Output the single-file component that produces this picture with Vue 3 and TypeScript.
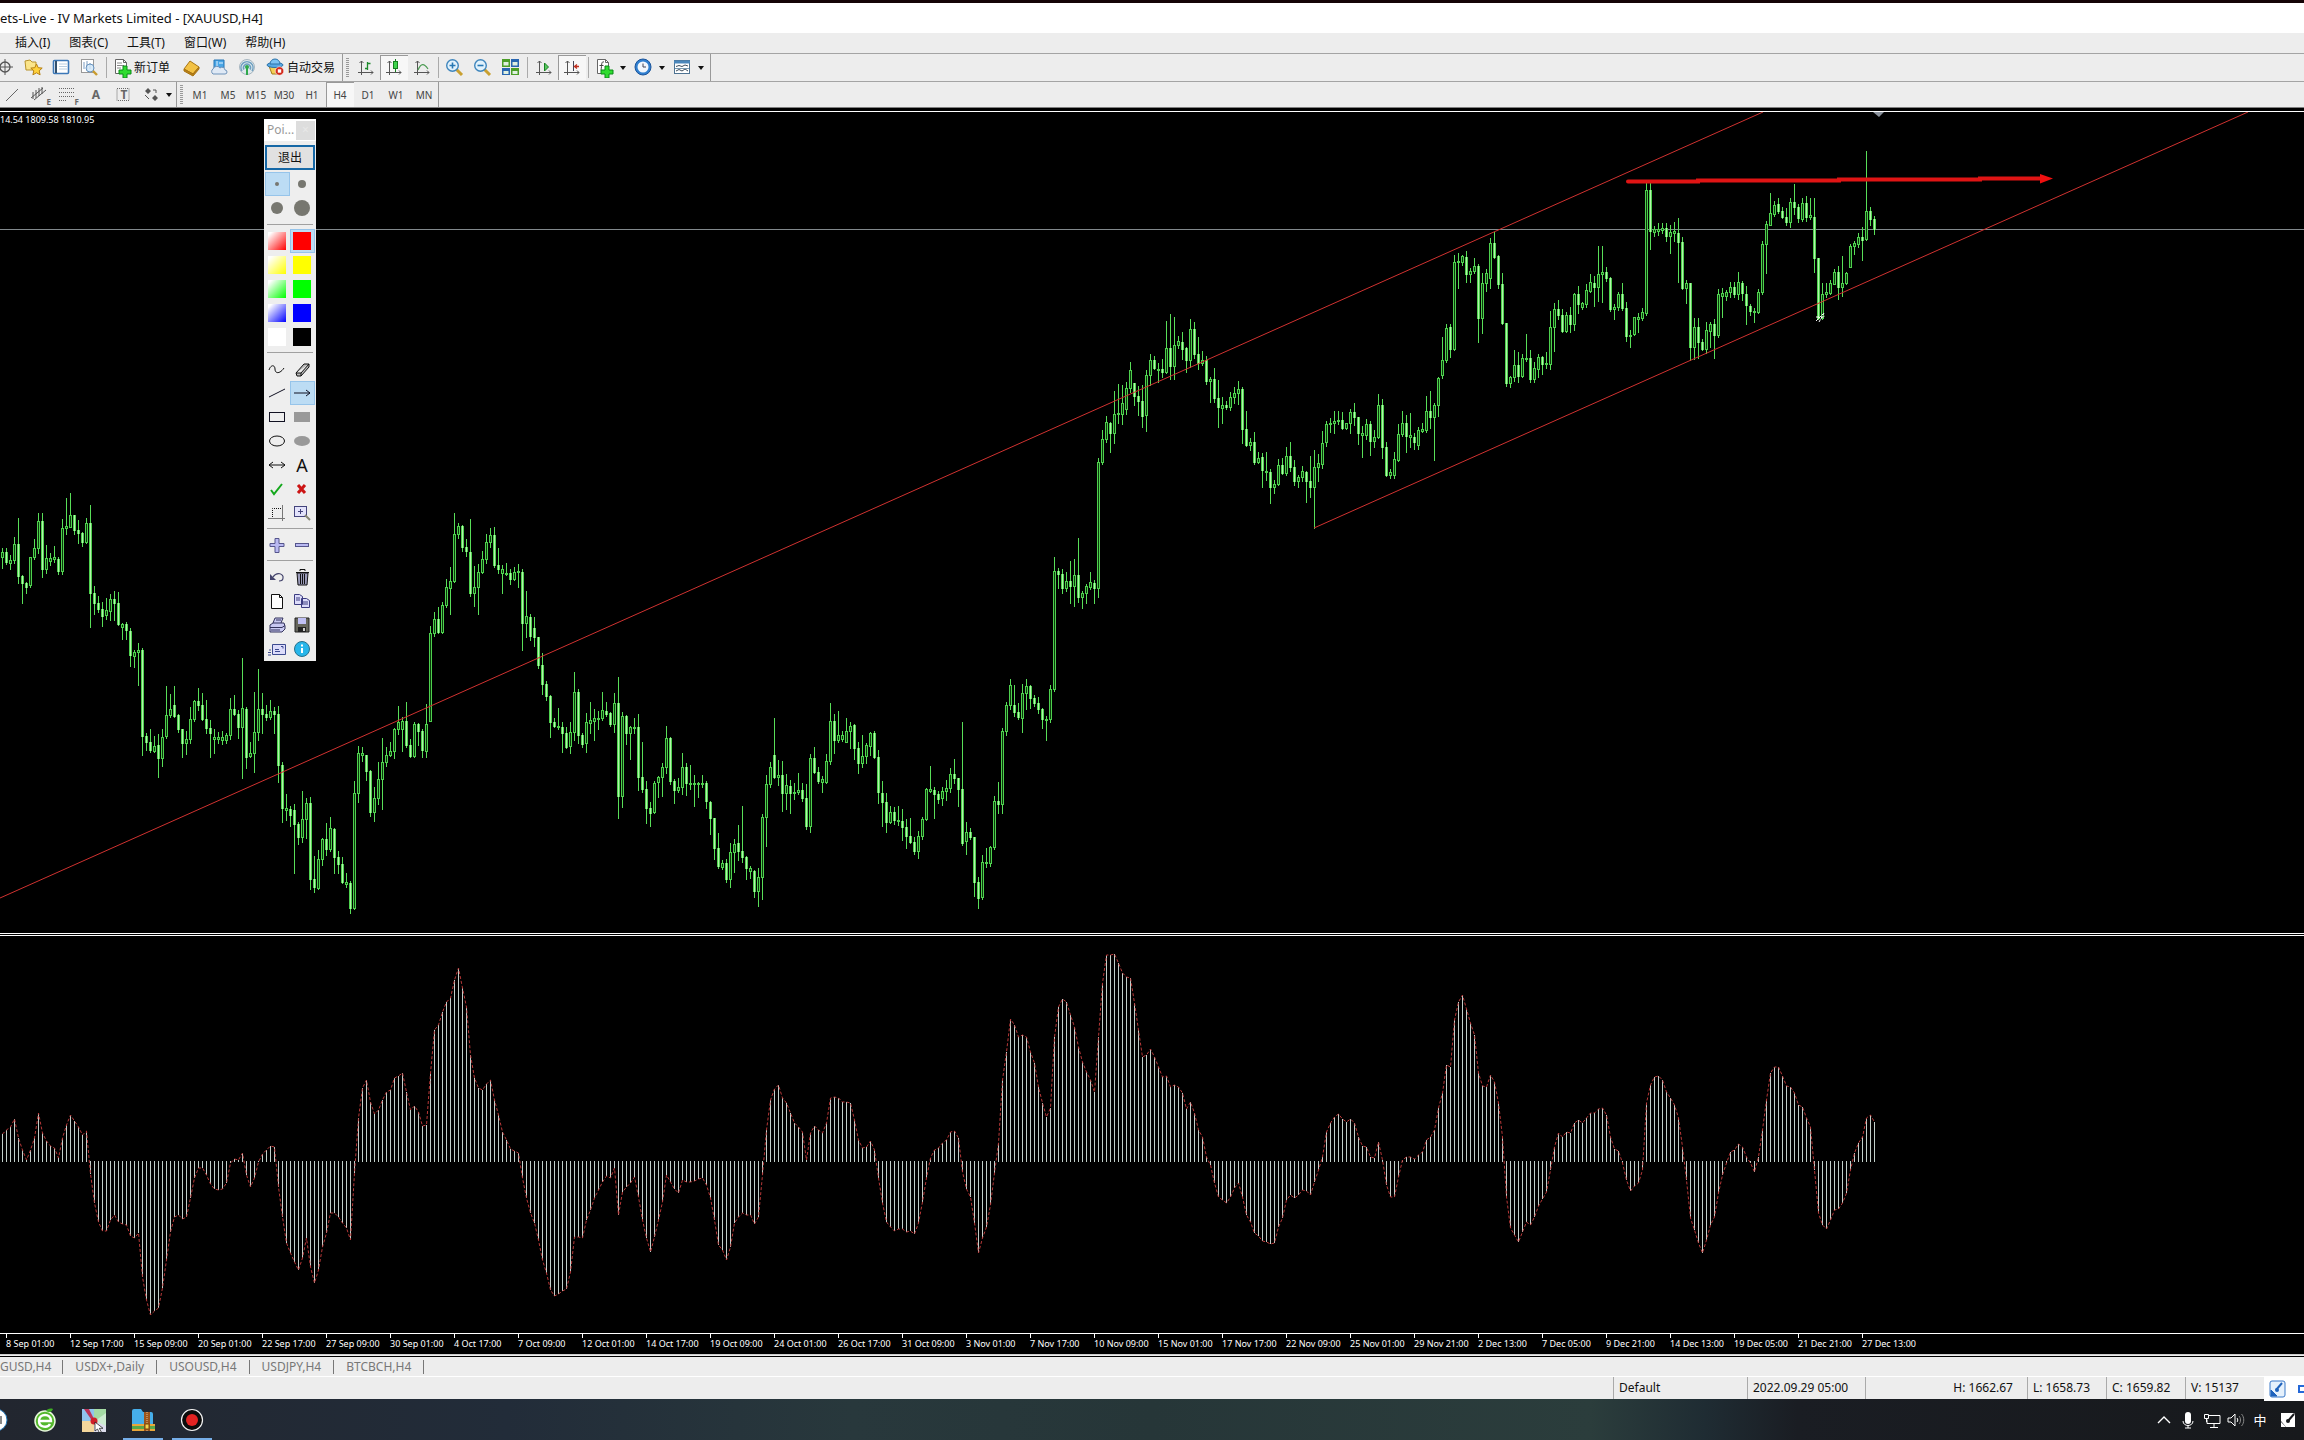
<script setup lang="ts">
interface Candle { x: number; high: number; top: number; bottom: number; low: number; falling: boolean }
interface Tool { name: string; label: string; pressed?: boolean; menu?: boolean; text?: string; sepAfter?: boolean }

/* One token per bar: high,top,bottom,low; a trailing "f" marks a falling bar. */
const candleData = `
548,552,557,568 548,552,562,564f 555,560,563,569 537,544,560,563 518,544,576,583f 575,576,583,603f 582,583,587,593f 557,557,585,587
539,548,557,559 513,521,548,553 513,521,569,577f 545,558,569,573 553,558,561,565 546,557,559,562 557,559,571,574f 519,528,571,574
498,526,528,534 493,515,527,527 515,515,530,534f 520,530,533,543f 532,533,542,546f 518,523,542,543 505,523,593,627f 586,593,603,614f
596,603,609,612f 602,609,616,626f 598,610,615,619 594,599,611,620 591,599,603,620f 592,603,624,625f 623,624,627,639 622,624,630,639f
628,631,655,666f 650,652,656,667 643,650,652,685 648,650,736,755f 733,736,742,750f 729,742,750,752f 736,746,751,752 734,745,758,777f
729,737,758,766 686,715,736,738 694,709,715,717 686,705,716,717f 714,715,729,732f 729,729,743,757f 731,739,743,754 707,719,739,743
700,701,719,721 688,701,705,710f 693,705,719,720f 700,719,728,733f 720,728,733,757f 729,737,739,753 732,737,739,743 731,737,740,744
733,735,740,743 698,709,735,739 695,709,714,715f 710,714,727,738f 658,708,727,778 707,709,757,768f 742,753,756,757 692,732,753,772
669,709,732,740 693,709,714,733f 705,714,717,720f 700,711,717,719 707,711,714,733f 706,714,765,782f 762,765,808,822f 794,808,810,820
806,809,815,826f 804,810,824,873f 822,824,837,844f 791,819,837,842 798,803,819,838 797,803,879,889f 856,879,887,892f 850,859,888,889
838,839,859,865 823,839,849,855f 817,828,849,851 828,829,857,873f 851,857,864,873f 857,864,882,883f 873,882,884,887 881,883,908,913f
781,793,908,909 746,753,793,802 747,753,755,761 755,755,771,780f 770,771,812,816f 787,798,812,821 762,779,798,804 738,762,779,809
747,755,762,766 742,751,755,756 728,729,751,758 706,722,729,734 717,721,729,751 702,721,745,747f 739,745,756,757f 722,724,756,757
723,724,731,745f 729,731,750,757f 704,724,751,757 626,633,721,721 612,619,633,636 607,619,632,633f 602,605,632,633 579,587,605,607
567,581,588,614 513,534,581,582 523,526,534,538 525,526,547,551f 539,547,551,556f 519,552,593,596f 566,587,593,606 564,572,587,614
551,559,572,573 534,542,559,563 528,535,542,547 527,535,565,567f 548,565,569,573f 565,569,573,593 563,573,574,575 569,573,579,584f
567,572,579,580 564,571,572,587 569,572,623,650f 591,616,623,637 614,617,636,640f 617,628,637,646f 637,637,665,668f 653,665,684,694f
681,684,696,700f 695,696,722,737f 718,722,726,727f 708,726,727,729 722,727,733,752f 727,733,747,748f 722,732,746,753 672,692,732,740
689,692,735,743f 733,735,744,747f 713,722,743,752 702,720,723,733 709,718,721,740 711,718,719,729 692,710,718,720 702,711,714,716f
712,713,724,726f 693,703,724,732 677,703,796,818f 712,716,796,807 715,716,733,744f 726,727,733,759 718,727,728,733 714,727,777,790f
742,777,789,792f 781,789,808,823f 802,808,813,826f 781,783,812,813 776,777,782,797 763,767,777,796 726,738,767,773 737,738,781,784f
779,781,790,803f 778,787,790,792 753,767,787,794 763,767,783,795f 765,783,784,789 775,783,784,806 782,783,784,797 775,783,784,787
781,783,801,808f 801,802,818,834f 818,818,848,859f 833,848,866,868f 860,863,867,869 859,863,879,882f 843,852,879,887 839,844,852,872
825,843,851,860f 806,851,857,862f 856,857,868,879f 866,868,871,878 870,871,891,897f 868,877,891,906 814,817,877,899 775,784,817,846
762,767,784,787 718,755,777,778f 760,775,777,785 761,775,793,811f 774,785,793,809 780,786,793,813f 783,792,793,799 773,790,792,794
783,790,798,801f 784,798,826,829f 754,758,826,832 747,758,772,773f 767,772,781,783f 776,779,782,792 754,761,782,783 703,721,761,764
714,721,740,753f 711,735,740,742 731,735,739,741 718,731,742,742 722,726,731,748 724,725,748,759f 742,748,763,773f 735,756,763,767
743,745,756,763 732,733,746,755 731,733,757,758f 750,757,792,803f 781,793,802,826f 793,802,822,832f 806,812,822,823 807,812,820,824f
806,820,821,825 809,821,827,840f 819,827,836,848f 818,836,842,843f 837,842,851,854f 831,836,851,858 817,819,836,839 788,789,819,820
766,789,791,792 787,790,794,818f 791,794,799,803f 787,791,798,805 780,788,791,800 768,774,788,792 759,774,778,783f 778,778,789,806f
722,789,843,845f 822,832,841,854 828,832,837,839f 837,837,882,896f 877,882,898,908f 855,862,897,899 848,862,863,867 846,847,863,866
796,801,847,849 782,801,804,813f 728,731,804,813 702,705,731,735 679,685,705,709 685,705,712,716f 703,712,717,719f 684,693,718,732
679,686,693,709 685,686,698,708f 695,698,703,706f 697,703,709,713f 708,709,719,728f 716,719,720,740 685,689,719,722 557,571,689,691
568,571,574,588f 569,574,588,593f 572,581,588,591 561,581,586,603f 559,575,586,606 538,575,597,602f 591,593,597,608 584,586,593,603
572,582,587,589 580,583,588,603f 458,462,588,597 430,439,462,464 416,422,439,442 422,423,433,452f 391,414,433,443 384,413,414,423
385,403,414,424 382,388,409,414 362,370,388,392 383,383,396,405f 386,396,401,415f 385,401,416,427f 370,375,415,431 354,360,375,385
356,360,368,369f 363,369,370,382 359,369,372,377f 321,348,372,373 314,348,366,379f 317,345,366,379 336,341,345,348 332,342,349,359f
347,348,360,372f 319,329,360,367 322,329,354,358f 337,354,363,369f 351,360,363,365 356,360,381,384f 377,379,381,402 368,379,398,402f
380,398,407,427f 397,405,408,423 401,405,407,409f 392,397,407,410 387,393,397,403 381,389,393,404 387,389,429,443f 411,429,445,446f
438,442,445,450 432,442,462,464f 452,458,462,463 453,457,470,487f 452,471,472,480 469,472,487,503f 480,484,487,493 459,465,484,485
458,465,473,474f 447,456,473,475 442,456,467,471f 460,467,481,485f 475,477,481,487 466,471,477,481 471,472,481,502f 456,481,487,497f
450,467,487,528 454,463,467,481 431,443,464,468 421,424,442,446 418,423,424,432 411,421,423,433 411,420,421,424 412,420,428,429f
423,423,428,429 409,412,423,433 403,412,417,425f 417,417,433,444f 426,433,435,457 419,424,435,439 421,424,441,455f 430,437,441,447
394,405,437,438 399,405,447,458f 442,447,475,476f 469,472,475,478 452,459,475,478 424,434,460,461 411,423,434,436 415,423,436,452f
413,435,437,447 433,437,442,449f 427,430,445,449 423,429,431,432 396,411,430,432 391,411,417,428f 403,405,417,460 377,378,405,416
337,360,375,378 324,328,360,362 324,327,349,357f 255,262,349,350 253,261,262,288 255,256,262,265 251,257,274,282f 268,271,274,282
258,266,271,273 264,266,318,342f 273,283,318,333 269,273,283,291 238,243,278,288 232,243,257,258f 255,256,284,288f 273,284,323,324f
323,323,383,386f 376,377,383,387 350,365,377,381 352,365,376,382f 354,358,376,377 334,358,359,361 350,358,379,382f 362,368,379,382
354,357,369,377 356,357,364,374f 352,363,364,368 311,327,364,369 303,309,327,351 300,309,315,319f 309,315,331,332f 312,315,331,332
307,315,324,332f 293,294,324,330 286,294,304,313f 302,303,307,309 284,290,304,307 274,282,291,292 276,283,287,306f 246,274,287,301
246,272,274,302 267,272,278,281f 277,278,309,311f 304,307,309,319 292,294,307,310 283,294,308,310f 302,308,336,341f 330,335,336,347
317,317,334,335 313,317,319,332 308,312,318,320 182,190,313,315 182,190,231,249f 226,229,232,236 223,229,231,235 223,228,230,233
223,228,236,241f 225,232,236,253 222,231,233,241 218,233,242,282f 237,242,288,289f 280,283,288,303 283,283,347,360f 318,327,347,359
318,327,342,358f 339,342,349,350f 322,330,349,353 322,324,331,347 319,324,335,358f 289,294,335,337 288,293,296,317 290,292,296,300
282,287,292,297 282,287,294,297f 272,282,294,299 281,283,293,300f 286,294,305,324f 304,306,311,315f 308,311,312,322 289,292,312,313
241,244,292,294 221,224,244,273 193,213,225,225 201,205,214,216 198,204,211,213f 207,211,217,218f 208,217,222,225f 198,202,222,227
184,202,207,214f 204,207,218,222f 198,203,219,221 196,203,217,221f 198,215,217,219 198,217,258,272f 258,258,318,319f 283,294,318,319
283,292,294,297 280,283,293,294 269,272,284,284 266,272,287,299f 256,283,287,296 272,273,283,284 244,246,267,267 241,243,246,254
233,237,244,247 227,237,240,260f 151,211,239,240 207,211,219,225f 216,219,229,234f`

const candles: Candle[] = candleData.trim().split(/\s+/).map((token, i) => {
  const falling = token.endsWith('f')
  const [high, top, bottom, low] = token.replace('f', '').split(',').map(Number)
  return { x: 2 + i * 4, high, top, bottom: Math.max(bottom, top + 1), low, falling }
})

const wickPath = candles.map(c => `M${c.x + 0.5} ${c.high}V${c.top}M${c.x + 0.5} ${c.bottom}V${c.low + 1}`).join('')
const bodyPath = candles.map(c => `M${c.x - 0.5} ${c.top + 0.5}H${c.x + 1.5}V${c.bottom + 0.5}H${c.x - 0.5}Z`).join('')
const fillPath = candles.filter(c => c.falling).map(c => `M${c.x + 0.5} ${c.top}V${c.bottom + 1}`).join('')

/* Oscillator level of each bar; the zero line lies at 1161. */
const zero = 1161
const levels = `
1134 1130 1127 1119 1138 1150 1160 1150 1138 1113 1133 1141 1146 1148 1158 1138 1125 1115 1121 1127 1135 1131 1174 1203 1222 1231 1231 1220 1215 1222
1224 1225 1236 1238 1233 1277 1300 1315 1311 1308 1288 1260 1232 1217 1215 1219 1217 1198 1178 1168 1168 1175 1184 1189 1190 1189 1183 1163 1159 1160
1153 1175 1187 1178 1162 1154 1150 1146 1147 1187 1217 1243 1253 1262 1270 1258 1238 1267 1283 1270 1247 1233 1213 1213 1217 1223 1228 1240 1173 1118
1088 1080 1102 1114 1110 1100 1092 1090 1078 1076 1073 1092 1110 1106 1112 1126 1125 1073 1030 1025 1012 1002 998 980 968 988 1007 1055 1078 1088
1090 1084 1080 1100 1115 1132 1140 1149 1151 1153 1178 1198 1213 1223 1240 1260 1273 1290 1296 1294 1291 1289 1272 1237 1237 1238 1220 1210 1198 1190
1182 1176 1178 1168 1215 1192 1187 1183 1177 1197 1220 1238 1252 1237 1220 1202 1175 1182 1189 1193 1180 1182 1182 1181 1179 1178 1185 1198 1220 1245
1250 1260 1247 1223 1217 1213 1215 1215 1224 1217 1175 1130 1100 1089 1085 1098 1103 1113 1123 1127 1132 1160 1133 1126 1130 1133 1123 1098 1097 1098
1102 1102 1103 1120 1140 1148 1147 1141 1150 1178 1203 1222 1227 1231 1229 1229 1232 1231 1234 1223 1202 1178 1158 1150 1148 1143 1140 1132 1131 1138
1172 1189 1197 1223 1253 1238 1227 1205 1173 1143 1080 1052 1019 1025 1037 1035 1037 1052 1063 1087 1103 1117 1108 1037 1007 999 1002 1015 1027 1047
1062 1072 1080 1092 1037 983 955 955 954 963 973 977 978 1003 1030 1057 1055 1049 1057 1067 1077 1076 1087 1085 1087 1093 1109 1102 1113 1130
1137 1157 1165 1183 1197 1200 1203 1197 1188 1183 1197 1215 1222 1233 1236 1241 1242 1244 1243 1227 1218 1200 1195 1198 1195 1190 1191 1195 1182 1170
1157 1132 1123 1117 1114 1119 1122 1119 1123 1137 1146 1147 1157 1158 1142 1160 1185 1197 1197 1177 1160 1157 1157 1159 1155 1152 1140 1137 1130 1108
1093 1065 1067 1020 1002 995 1009 1023 1035 1073 1086 1087 1075 1082 1103 1137 1197 1228 1235 1242 1232 1222 1225 1217 1206 1199 1192 1170 1147 1133
1137 1132 1133 1123 1120 1123 1118 1113 1113 1109 1108 1115 1137 1149 1151 1163 1180 1191 1186 1183 1170 1103 1085 1077 1076 1080 1092 1098 1105 1118
1147 1180 1218 1230 1243 1253 1240 1225 1217 1193 1175 1163 1152 1150 1144 1147 1157 1163 1172 1157 1130 1100 1073 1067 1067 1076 1086 1087 1093 1105
1107 1118 1127 1170 1213 1225 1229 1220 1210 1209 1203 1193 1170 1153 1143 1137 1118 1115 1122`.trim().split(/\s+/).map(Number)

const barPath = levels.map((y, i) => `M${2.5 + i * 4} ${y < zero ? zero + 1 : zero}V${y}`).join('')
const signalPoints = levels.map((y, i) => `${2.5 + i * 4},${y}`).join(' ')

const dates = ['8 Sep 01:00', '12 Sep 17:00', '15 Sep 09:00', '20 Sep 01:00', '22 Sep 17:00', '27 Sep 09:00', '30 Sep 01:00',
  '4 Oct 17:00', '7 Oct 09:00', '12 Oct 01:00', '14 Oct 17:00', '19 Oct 09:00', '24 Oct 01:00', '26 Oct 17:00', '31 Oct 09:00',
  '3 Nov 01:00', '7 Nov 17:00', '10 Nov 09:00', '15 Nov 01:00', '17 Nov 17:00', '22 Nov 09:00', '25 Nov 01:00', '29 Nov 21:00',
  '2 Dec 13:00', '7 Dec 05:00', '9 Dec 21:00', '14 Dec 13:00', '19 Dec 05:00', '21 Dec 21:00', '27 Dec 13:00']

const menus = ['插入(I)', '图表(C)', '工具(T)', '窗口(W)', '帮助(H)']

const axes = '<path d="M5.5 3v14M2 14.5h15M3.5 5l2-2 2 2M15 12.5l2 2-2 2" stroke="#555" fill="none"/>'
const doc = '<path d="M2.500 1.500h8l3 3v11h-11z" fill="#fff" stroke="#666"/><path d="M10.500 1.500v3h3" fill="none" stroke="#666"/>'
const plus = '<path d="M10 8h4v4h4v4h-4v4h-4v-4H6v-4h4z" fill="#2fdc2f" stroke="#0a8a18"/>'
const icons: Record<string, string> = {
  cross: '<circle cx="9" cy="9" r="5" fill="none" stroke="#555" stroke-width="1.300"/><path d="M9 1v16M1 9h16" stroke="#555"/>',
  folder: '<path d="M1 3l5-1 2 2h4v8H2z" fill="#fbe58a" stroke="#b8932c"/><path d="M12.500 6l1.700 3.700 4 .4-3 2.700.9 4-3.600-2-3.600 2 .9-4-3-2.700 4-.4z" fill="#ffd23c" stroke="#b67f10"/>',
  panel: '<rect x="1.500" y="2.500" width="15" height="13" rx="1" fill="#fff" stroke="#3c78b8" stroke-width="1.600"/><path d="M4 3v12" stroke="#33516e" stroke-width="2"/><path d="M7 6h8M7 8.500h8M7 11h8" stroke="#b9cee0"/>',
  preview: '<rect x="1.500" y="1.500" width="12" height="13" fill="#fff" stroke="#999"/><path d="M4 4v7M7 3v9M10 5v6" stroke="#7a9cc0"/><circle cx="10" cy="10" r="4" fill="#cfe6f8" fill-opacity=".8" stroke="#6792bd"/><path d="M13 13l4 4" stroke="#c99b2d" stroke-width="2.400"/>',
  order: doc + '<path d="M4 5h5M4 7.500h7M4 10h4" stroke="#888"/>' + plus,
  gold: '<path d="M2 11l6-8 9 6-6 7z" fill="#f3c245" stroke="#a87412"/><path d="M2 11l9 5 6-7v2l-6 7-9-5z" fill="#b98119" stroke="#a87412"/>',
  server: '<path d="M4 2h10v8H4z" fill="#4aa6e6" stroke="#2575b4"/><path d="M7 3v6M9 5h4" stroke="#dff1ff"/><path d="M3 16a3 3 0 0 1 0-5 4 4 0 0 1 7-1 3 3 0 0 1 5 2 2 2 0 0 1 0 4z" fill="#dfe9f5" stroke="#6f93ba"/>',
  signal: '<circle cx="9" cy="9" r="7.500" fill="#dfe8ec" stroke="#a7b6c0"/><path d="M4 13a6 6 0 1 1 10 0M6 11.500a3.500 3.500 0 1 1 6 0" fill="none" stroke="#6d9fc0" stroke-width="1.500"/><circle cx="9" cy="9" r="2" fill="#2fa84a"/><path d="M9 10v7" stroke="#2fa84a" stroke-width="2"/>',
  robot: '<path d="M3 8h12l-2 8H6z" fill="#f3cf55" stroke="#a57d1a"/><ellipse cx="9" cy="7" rx="8" ry="2.500" fill="#58a9e4" stroke="#2c72a8"/><path d="M4 6a5 5 0 0 1 10 0z" fill="#7cc2f2" stroke="#2c72a8"/><circle cx="13.500" cy="13" r="4.300" fill="#d32a1c" stroke="#fff" stroke-width=".6"/><rect x="11.800" y="11.300" width="3.400" height="3.400" fill="#fff"/>',
  bars: axes + '<path d="M11.500 4v8M11.500 5.500h3M9 10.500h2.500" stroke="#1c8a2c" stroke-width="1.300"/>',
  candle: axes + '<path d="M11.500 1v13" stroke="#16801f"/><rect x="9.500" y="3.500" width="4" height="7" fill="#3fd44d" stroke="#16801f"/>',
  line: axes + '<path d="M6 12c3-7 6-7 10-1" fill="none" stroke="#4b9b52" stroke-width="1.200"/>',
  zoomin: '<path d="M11 11l6 6" stroke="#c9a030" stroke-width="3"/><circle cx="7.500" cy="7.500" r="5.800" fill="#e2f2fc" stroke="#3f86bd" stroke-width="1.400"/><path d="M7.500 4.500v6M4.500 7.500h6" stroke="#2878b4" stroke-width="1.600"/>',
  zoomout: '<path d="M11 11l6 6" stroke="#c9a030" stroke-width="3"/><circle cx="7.500" cy="7.500" r="5.800" fill="#e2f2fc" stroke="#3f86bd" stroke-width="1.400"/><path d="M4.500 7.500h6" stroke="#2878b4" stroke-width="1.600"/>',
  tile: '<path d="M1 1h8v8H1zM10 10h8v7h-8z" fill="#4c9e28"/><path d="M10 1h8v8h-8zM1 10h8v7H1z" fill="#2866b0"/><path d="M2.500 4h5v3.500h-5zM11.500 4h5v3.500h-5zM2.500 13h5v3h-5zM11.500 13h5v3h-5z" fill="#dff0e0"/>',
  scroll: axes + '<path d="M10.500 5v8l4-4z" fill="#58c860" stroke="#16801f"/>',
  shift: axes + '<path d="M11.500 3v10" stroke="#445"/><path d="M17 8.500h-4M15 6.500l-2.500 2 2.500 2" stroke="#c03020" fill="none" stroke-width="1.300"/>',
  indicator: doc + '<path d="M9 4c-3-1-2 3-3 8M4.500 7.500h4" fill="none" stroke="#444"/>' + plus,
  clock: '<circle cx="9" cy="9" r="8" fill="#2f7fd0" stroke="#1c549a"/><circle cx="9" cy="9" r="5.500" fill="#f1f7fd"/><path d="M9 5.500V9h3" fill="none" stroke="#445"/>',
  template: '<rect x="1.500" y="2.500" width="15" height="13" fill="#fff" stroke="#4e7392"/><path d="M1 4h16" stroke="#4a86ba" stroke-width="3"/><path d="M3 8.500l3-1 3 1 3-1.500 3 1M3 13l3-1.500 3 1.500 3-2 3 2" fill="none" stroke="#3c4c5c"/><path d="M2 10.500h14" stroke="#7899b0"/>',
  trend: '<path d="M4 16L16 4" stroke="#666"/>',
  channel: '<path d="M1 13L13 3M4 15L16 5M3 7v7M6 5v8M9 3v8M12 2v7" stroke="#555"/>',
  fibo: '<path d="M1 3.500h15M1 7.500h15M1 11.500h15M1 15.500h8" stroke="#666" stroke-dasharray="1 1"/>',
  letter: '', label: '<path d="M3 3.500h12v12H3z" fill="none" stroke="#666" stroke-dasharray="1 1"/>',
  arrows: '<path d="M3 6l3-3 3 3-3 3zM10 13l3-3 3 3-3 3z" fill="#555"/><path d="M5 12l2 2M11 5h3v3M3 10l4 4" stroke="#555" fill="none"/>',
  free: '<path d="M1 10c2-6 6-5 6-1 0 5 5 5 9-1" fill="none" stroke="#111"/>',
  marker: '<path d="M3 13l8-9h5l-8 9zM3 13l1 3h4l8-9V4M8 13v3" fill="#bbb" stroke="#111"/>',
  pline: '<path d="M1 13L17 5" stroke="#112"/>',
  arrow: '<path d="M1 9h16M13 6l4 3-4 3" fill="none" stroke="#112"/>',
  rect: '<rect x="1.500" y="4.500" width="15" height="9" fill="none" stroke="#112"/>',
  rectf: '<rect x="1" y="4" width="16" height="10" fill="#999"/>',
  oval: '<ellipse cx="9" cy="9" rx="7.500" ry="5" fill="none" stroke="#111"/>',
  ovalf: '<ellipse cx="9" cy="9" rx="8" ry="5" fill="#999"/>',
  both: '<path d="M1 9h16M5 6L1 9l4 3M13 6l4 3-4 3" fill="none" stroke="#111"/>',
  check: '<path d="M3 10l3 4 8-10" fill="none" stroke="#14a81c" stroke-width="2"/>',
  cancel: '<path d="M5 5l7 8M12 5l-7 8" stroke="#cc1414" stroke-width="3"/>',
  crop: '<path d="M4.500 13V4.500H13" fill="none" stroke="#111" stroke-dasharray="1 1"/><path d="M0 14.500h17M14.500 1v16" stroke="#777"/>',
  lens: '<rect x="1.500" y="2.500" width="12" height="10" fill="#e3e3fb" stroke="#44447c"/><path d="M7.500 5v5M5 7.500h5" stroke="#44447c"/><path d="M12 11l5 5" stroke="#887" stroke-width="2"/>',
  add: '<path d="M7 2.500h4v5h5v3h-5v6H7v-6H2v-3h5z" fill="#b9b9f2" stroke="#55558c"/>',
  minus: '<rect x="2.500" y="7.500" width="13" height="3" fill="#b9b9f2" stroke="#55558c"/>',
  undo: '<path d="M5 9c4-6 11-3 10 1 0 2-2 3-4 3" fill="none" stroke="#44446c" stroke-width="1.200"/><path d="M2 6v6h6z" fill="#44446c"/>',
  trash: '<path d="M4 5h11l-1 12H5z" fill="#9c9cba" stroke="#111"/><path d="M3 4.500h13M7 3V1.500h5V3M7.500 6v10M9.500 6v10M11.500 6v10" fill="none" stroke="#111"/>',
  page: '<path d="M3.500 2.500h8l3 3v11h-11z" fill="#fff" stroke="#111"/><path d="M11.500 2.500v3h3" fill="none" stroke="#111"/>',
  copy: '<path d="M1.500 2.500h5l3 2v8h-8zM8.500 6.500h5l3 2v7h-8z" fill="#dcdcfa" stroke="#3c3c80"/><path d="M3 6h4M3 8h4M10 10h5M10 12h5" stroke="#3c3c80"/>',
  print: '<path d="M5 7l2-5h8l-2 5M2 9l3-2h11l1 3v3l-3 3H2z" fill="#c9c9f2" stroke="#33335c"/><path d="M2 11.500h12l3-2M8 4h5M3 14h9" stroke="#33335c" fill="none"/>',
  save: '<path d="M2 2h14v14H2z" fill="#66665c" stroke="#222"/><path d="M5 2h8v6H5z" fill="#c0c0f4"/><path d="M5 11h8v5H5z" fill="#222"/><path d="M10 12h2v3h-2z" fill="#ccc"/>',
  mail: '<path d="M4.500 4.500h13v10h-13z" fill="#dcdcfa" stroke="#3c4a90"/><path d="M13 6.500h2v2M7 9.500h4M7 11.500h5M1 10h2M0 12.500h3M0 15h3" stroke="#3c4a90" fill="none"/>',
  info: '<circle cx="9" cy="9" r="7.500" fill="#27b6ea" stroke="#26708c"/><path d="M9 8v5M9 4.500v2" stroke="#fff" stroke-width="2"/>',
}

const mainTools: Tool[] = [
  { name: 'cross', label: '十字光标' }, { name: 'folder', label: '收藏夹' }, { name: 'panel', label: '数据窗口' },
  { name: 'preview', label: '策略测试', sepAfter: true }, { name: 'order', label: '新订单', text: '新订单' },
  { name: 'gold', label: '市场' }, { name: 'server', label: '主机' }, { name: 'signal', label: '信号' },
  { name: 'robot', label: '自动交易', text: '自动交易' },
]
const chartTools: Tool[] = [
  { name: 'bars', label: '柱状图' }, { name: 'candle', label: '蜡烛图', pressed: true }, { name: 'line', label: '折线图', sepAfter: true },
  { name: 'zoomin', label: '放大' }, { name: 'zoomout', label: '缩小' }, { name: 'tile', label: '平铺窗口', sepAfter: true },
  { name: 'scroll', label: '自动滚动' }, { name: 'shift', label: '图表平移', pressed: true, sepAfter: true },
  { name: 'indicator', label: '指标', menu: true }, { name: 'clock', label: '时间周期', menu: true }, { name: 'template', label: '模板', menu: true },
]
const drawTools = [['trend', ''], ['channel', 'E'], ['fibo', 'F'], ['letter', 'A'], ['label', 'T'], ['arrows', '']]
const periods = ['M1', 'M5', 'M15', 'M30', 'H1', 'H4', 'D1', 'W1', 'MN']

const dots = [4, 8, 12, 16]
const colours = ['#ff0000', '#ffff00', '#00ff00', '#0000ff', '#000000']
const paintTools = ['free', 'marker', 'pline', 'arrow', 'rect', 'rectf', 'oval', 'ovalf', 'both', 'type', 'check', 'cancel', 'crop', 'lens']
const fileTools = ['undo', 'trash', 'page', 'copy', 'print', 'save', 'mail', 'info']
const symbols = ['USDX+,Daily', 'USOUSD,H4', 'USDJPY,H4', 'BTCBCH,H4']
</script>

<template>
  <div class="screen">
    <header class="title">ets-Live - IV Markets Limited - [XAUUSD,H4]</header>
    <nav class="menu"><button v-for="m in menus" :key="m">{{ m }}</button></nav>

    <div class="bar main-bar">
      <div class="group first">
        <template v-for="t in mainTools" :key="t.name">
          <button class="tool" :class="{ wide: t.text, order: t.name === 'order' }" :aria-label="t.label">
            <svg viewBox="0 0 20 20" v-html="icons[t.name]" /><span v-if="t.text">{{ t.text }}</span>
          </button>
          <i v-if="t.sepAfter" class="sep" />
        </template>
      </div>
      <div class="group charts">
        <i class="grip" />
        <template v-for="t in chartTools" :key="t.name">
          <button class="tool" :class="{ pressed: t.pressed, drop: t.menu }" :aria-label="t.label">
            <svg viewBox="0 0 20 20" v-html="icons[t.name]" /><b v-if="t.menu" class="caret" />
          </button>
          <i v-if="t.sepAfter" class="sep" />
        </template>
      </div>
    </div>

    <div class="bar draw-bar">
      <div class="group second">
        <button v-for="[name, mark] in drawTools" :key="name" class="tool" :aria-label="name">
          <svg viewBox="0 0 20 20" v-html="icons[name]" />
          <em v-if="mark" :class="{ small: mark === 'E' || mark === 'F' }">{{ mark }}</em>
        </button>
        <b class="caret" />
      </div>
      <div class="group">
        <i class="grip" />
        <button v-for="p in periods" :key="p" class="tool period" :class="{ pressed: p === 'H4' }">{{ p }}</button>
      </div>
    </div>

    <main class="chart">
      <div class="ohlc">14.54 1809.58 1810.95</div>
      <svg class="plot" viewBox="0 112 2304 821" role="img" aria-label="XAUUSD H4">
        <path d="M0 229.500H2304" stroke="#82898c" />
        <g fill="none" shape-rendering="crispEdges">
          <path :d="wickPath" stroke="#58de58" />
          <path :d="bodyPath" stroke="#4ed04e" fill="#0a3a0a" />
          <path :d="fillPath" stroke="#b4f5ac" />
        </g>
        <path d="M0 898L1763 112M1314 528L2248 112" stroke="#d03230" fill="none" />
        <path d="M1873 112h11l-5 5z" fill="#8a919c" />
        <path d="M1628 181.500H1698V180.500H1839V179.500H1980V178.500H2042" stroke="#e01414" stroke-width="4" stroke-linecap="round" fill="none" />
        <path d="M2040 174l13 4.500-13 5z" fill="#f01010" />
        <path d="M1816 321l7-7M1819 322l5-9M1816 317h4M1821 318l4-2" stroke="#fff" stroke-dasharray="3 1" />
      </svg>
      <svg class="plot lower" viewBox="0 936 2304 397" role="img" aria-label="MACD">
        <path :d="barPath" stroke="#c2cfca" fill="none" shape-rendering="crispEdges" />
        <polyline :points="signalPoints" fill="none" stroke="#b83838" stroke-dasharray="3 2" />
      </svg>
      <ol class="axis"><li v-for="d in dates" :key="d">{{ d }}</li></ol>
    </main>

    <nav class="tabs">
      <a href="#" class="cut">GUSD,H4</a>
      <a v-for="s in symbols" :key="s" href="#">{{ s }}</a>
    </nav>
    <footer class="status">
      <span class="profile">Default</span>
      <span class="time">2022.09.29 05:00</span>
      <span class="high">H: 1662.67</span>
      <span class="price">L: 1658.73</span>
      <span class="price">C: 1659.82</span>
      <span class="price">V: 15137</span>
      <span class="ime">
        <svg viewBox="0 0 40 24"><rect x="6" y="4" width="15" height="16" rx="2" fill="#e6f1fc" stroke="#3a78c8" /><path d="M7 13l6 6H7z" fill="#1f62bc" stroke="#1f62bc" /><path d="M12 13l6-7" stroke="#1f62bc" stroke-width="2" /><circle cx="13" cy="13" r="2" fill="#1f62bc" /><path d="M41 9h-6v6h6" fill="none" stroke="#2468d8" stroke-width="2" /></svg>
      </span>
    </footer>

    <div class="taskbar">
      <div class="apps">
        <button aria-label="浏览器"><svg viewBox="0 0 24 24"><circle cx="12" cy="12" r="11" fill="#fff" stroke="#2478b8" /><path d="M17 8v8" stroke="#888" stroke-width="2" /></svg></button>
        <button aria-label="安全浏览器"><svg viewBox="0 0 24 24"><circle cx="12" cy="13" r="10" fill="#54b82c" stroke="#e8f8dc" stroke-width="1.500" /><path d="M6 13h12c0-8-12-8-12 0 0 7 9 7 11 3" fill="none" stroke="#fff" stroke-width="2.400" /><path d="M13 3c1-2 4-3 7-2-1 3-4 4-7 2z" fill="#3fae24" /></svg></button>
        <button aria-label="画图"><svg viewBox="0 0 24 24"><path d="M0 1h24v23H0z" fill="#f6f0d8" /><path d="M0 1h12v12H0z" fill="#8fc4ee" /><path d="M12 1h12v12H12z" fill="#a4dba4" /><path d="M0 13h12v11H0z" fill="#f4d79c" /><path d="M12 13h12v11H12z" fill="#dcdcec" /><path d="M2 1h5l6 12-2 1z" fill="#bb3458" /><path d="M24 5l-11 8 11 5" fill="#cdecd0" /><circle cx="12" cy="13" r="3.500" fill="#cf1f28" /><path d="M13 14v9l2.500-2 2 4 1.800-1-2-3.700h3.700z" fill="#fff" stroke="#111" stroke-width=".7" /></svg></button>
        <button class="open" aria-label="文件夹"><svg viewBox="0 0 24 24"><path d="M1 3q0-2 2-2h7l2 3h8q2 0 2 2v12H1z" fill="#46aeea" /><path d="M1 16h23v7H1z" fill="#e9a63a" /><path d="M1 18h23v3H1z" fill="#58a848" /><path d="M13 4h6v19h-6z" fill="#9a541c" /><path d="M16 4v19" stroke="#e8c088" stroke-dasharray="1 1" /><rect x="14" y="16" width="4" height="5" fill="#f2d04c" stroke="#7a4a10" /></svg></button>
        <button class="open" aria-label="录屏"><svg viewBox="0 0 24 24"><circle cx="12" cy="12" r="10.500" fill="#0c0c0c" stroke="#f4f4f4" stroke-width="1.200" /><circle cx="12" cy="12" r="6" fill="#e32322" /></svg></button>
      </div>
      <div class="tray">
        <button aria-label="更多"><svg viewBox="0 0 20 20"><path d="M4 13l6-6 6 6" fill="none" stroke="#fff" stroke-width="1.400" /></svg></button>
        <button aria-label="麦克风"><svg viewBox="0 0 20 20"><rect x="7" y="2" width="6" height="12" rx="3" fill="#fff" /><path d="M5 11c0 6 10 6 10 0M10 15v3M7 18h6" fill="none" stroke="#fff" /></svg></button>
        <button aria-label="网络"><svg viewBox="0 0 20 20"><path d="M6 5.500h12v8H5v-4M12 14v3M8 17.500h8M2.500 4.500h4v4h-4zM4.500 8v4" fill="none" stroke="#fff" /></svg></button>
        <button aria-label="音量"><svg viewBox="0 0 20 20"><path d="M2 8h3l4-4v12l-4-4H2zM11 8c1 1 1 3 0 4" fill="none" stroke="#fff" /><path d="M13 6c2 2 2 6 0 8M15.500 4c3 3 3 9 0 12" fill="none" stroke="#888" /></svg></button>
        <button class="lang">中</button>
        <button class="last" aria-label="输入法"><svg viewBox="0 0 20 20"><path d="M3 3h12q2 0 2 2v12H8l-5-6z" fill="#fff" /><path d="M3 12v5h5z" fill="#fff" /><path d="M10 11l6-7" stroke="#17191c" stroke-width="2" /><circle cx="10" cy="11" r="2" fill="#17191c" /></svg></button>
      </div>
    </div>

    <aside class="palette">
      <div class="palette-head"><span>Poi...</span><button aria-label="关闭">×</button></div>
      <button class="exit">退出</button>
      <div class="cells">
        <button v-for="(d, i) in dots" :key="d" :class="{ on: i === 0 }" :aria-label="'笔宽 ' + d"><u :style="{ width: d + 'px', height: d + 'px' }" /></button>
      </div>
      <hr class="roomy">
      <div class="cells">
        <template v-for="(c, i) in colours" :key="c">
          <button :aria-label="'半透明 ' + c"><s :style="{ background: i === 4 ? '#fff' : `linear-gradient(135deg, #fff 10%, ${c})` }" /></button>
          <button :class="{ on: i === 0 }" :aria-label="c"><s :style="{ background: c }" /></button>
        </template>
      </div>
      <hr>
      <div class="cells">
        <button v-for="t in paintTools" :key="t" :class="{ on: t === 'arrow' }" :aria-label="t">
          <span v-if="t === 'type'" class="glyph">A</span>
          <svg v-else viewBox="0 0 18 18" v-html="icons[t]" />
        </button>
      </div>
      <hr>
      <div class="cells">
        <button v-for="t in ['add', 'minus']" :key="t" :aria-label="t"><svg viewBox="0 0 18 18" v-html="icons[t]" /></button>
      </div>
      <hr>
      <div class="cells">
        <button v-for="t in fileTools" :key="t" :aria-label="t"><svg viewBox="0 0 18 18" v-html="icons[t]" /></button>
      </div>
    </aside>
  </div>
</template>

<style>
body { margin: 0; background: #17191c; }
</style>

<style scoped>
.screen { position: relative; min-height: 100vh; display: flex; flex-direction: column; overflow: hidden; background: #ededed; color: #111; font: 12px/16px "Noto Sans", "Noto Sans CJK SC", sans-serif; }
button { margin: 0; padding: 0; border: 0; background: none; font: inherit; color: inherit; }
.title { height: 30px; border-top: 3px solid #140406; background: #fff; font-size: 13px; line-height: 30px; white-space: nowrap; }
.menu { height: 20px; padding-left: 15px; display: flex; gap: 19px; align-items: center; }

.bar { display: flex; border-top: 1px solid #a4a4a4; }
.main-bar { height: 27px; }
.draw-bar { height: 25px; border-bottom: 1px solid #808080; }
.group { display: flex; align-items: center; border-right: 1px solid #999; box-sizing: border-box; }
.first { margin-left: -8px; padding-right: 3px; }
.second { margin-left: -2px; padding-right: 4px; }
.charts { padding-right: 2px; }
.tool { position: relative; width: 28px; height: 25px; display: flex; align-items: center; justify-content: center; flex: none; }
.tool svg { width: 20px; height: 20px; flex: none; }
.wide { width: auto; padding: 0 4px; }
.order { padding-right: 8px; }
.wide span { margin-left: 1px; }
.pressed { background: #f7f7f7; box-shadow: inset 1px 1px 0 #999; }
.drop { width: 39px; padding-left: 4px; box-sizing: border-box; justify-content: flex-start; gap: 5px; }
.caret { width: 0; height: 0; border: 3px solid transparent; border-top: 4px solid #111; border-bottom: 0; }
.sep { width: 1px; height: 21px; margin: 0 2px; background: #aaa; flex: none; }
.grip { width: 3px; height: 19px; margin: 0 3px; background: repeating-linear-gradient(#999 0 1px, #ededed 1px 2px); flex: none; }
.tool em { position: absolute; font: bold 12px/16px "Noto Sans", sans-serif; color: #666; }
.tool em.small { right: 3px; bottom: 0; font-size: 8px; line-height: 10px; }
.period { font-size: 10px; color: #444; }

.chart { position: relative; background: #000; border-top: 1px solid #fff; margin-top: 3px; box-shadow: 0 -3px #000; }
.plot { display: block; width: 100%; height: auto; }
.lower { border-top: 1px solid #fff; box-shadow: 0 -1px #000, 0 -2px #fff; margin-top: 2px; }
.ohlc { position: absolute; left: 0; top: 1px; color: #fff; font-size: 9px; line-height: 14px; }
.axis { height: 20px; margin: 0; padding: 0 0 0 6px; border-top: 1px solid #fff; border-bottom: 1px solid #ccc; list-style: none; display: flex; color: #fff; font-size: 9px; line-height: 19px; overflow: hidden; }
.axis li { position: relative; width: 64px; flex: none; white-space: nowrap; }
.axis li::before { content: ""; position: absolute; left: 0; top: 0; width: 1px; height: 4px; background: #fff; }

.tabs { height: 19px; border-top: 1px solid #000; margin-top: 1px; display: flex; align-items: center; border-bottom: 1px solid #fff; }
.tabs a { padding: 0 12px; border-right: 1px solid #777; line-height: 14px; color: #777; text-decoration: none; }
.tabs .cut { padding-left: 0; padding-right: 11px; }
.status { height: 22px; display: flex; justify-content: flex-end; align-items: stretch; }
.status span { box-sizing: border-box; padding-left: 5px; border-left: 1px solid #aaa; line-height: 22px; }
.status .profile { width: 134px; }
.status .time { width: 118px; }
.status .high { width: 162px; text-align: right; padding-right: 14px; }
.status .price { width: 79px; }
.status .ime { width: 40px; height: 24px; padding: 0; border: 0; background: #fff; z-index: 1; }
.ime svg { display: block; width: 40px; height: 24px; overflow: hidden; }

.taskbar { min-height: 41px; flex: 1; display: flex; justify-content: space-between; background: linear-gradient(90deg, #22262f, #222c39 22%, #28383c 37%, #263638 50%, #2b3d3c 69%, #1f2c33 74%, #1a1d23 78%, #17191c); }
.apps { display: flex; margin-left: -29px; }
.apps button { width: 49px; display: flex; align-items: center; justify-content: center; box-sizing: border-box; }
.apps svg { width: 24px; height: 24px; }
.apps .open { background: linear-gradient(#76aee8, #76aee8) center bottom / 40px 2px no-repeat; }
.tray { display: flex; color: #fff; }
.tray button { width: 24px; display: flex; align-items: center; justify-content: center; }
.tray svg { width: 20px; height: 20px; }
.tray .lang { font-size: 13px; }
.tray .last { width: 32px; }

.palette { position: absolute; left: 264px; top: 119px; width: 52px; padding: 0 1px; box-sizing: border-box; background: #eee; color: #111; }
.palette-head { display: flex; height: 22px; margin: 0 -1px; background: #fff; align-items: center; justify-content: space-between; color: #999; padding-left: 3px; }
.palette-head button { width: 19px; height: 19px; background: #ddd; color: #e8e8e8; margin-right: 1px; }
.exit { display: block; width: 100%; height: 25px; margin: 4px 0 2px; border: 2px solid #1668a6; background: #e1e1e1; line-height: 20px; }
.cells { display: grid; grid-template-columns: 25px 25px; grid-auto-rows: 24px; }
.cells button { display: flex; align-items: center; justify-content: center; padding-right: 1px; }
.cells .on { background: #bcdcf4; box-shadow: inset 0 0 0 1px #96c4ea; }
.cells svg { width: 18px; height: 18px; }
.cells u { border-radius: 50%; background: #777770; }
.cells s { width: 18px; height: 18px; }
.glyph { font-size: 18px; }
.palette hr { margin: 3px 2px 4px; border: 0; border-top: 1px solid #a0a0a0; }
.palette .roomy { margin-top: 4px; }
</style>
